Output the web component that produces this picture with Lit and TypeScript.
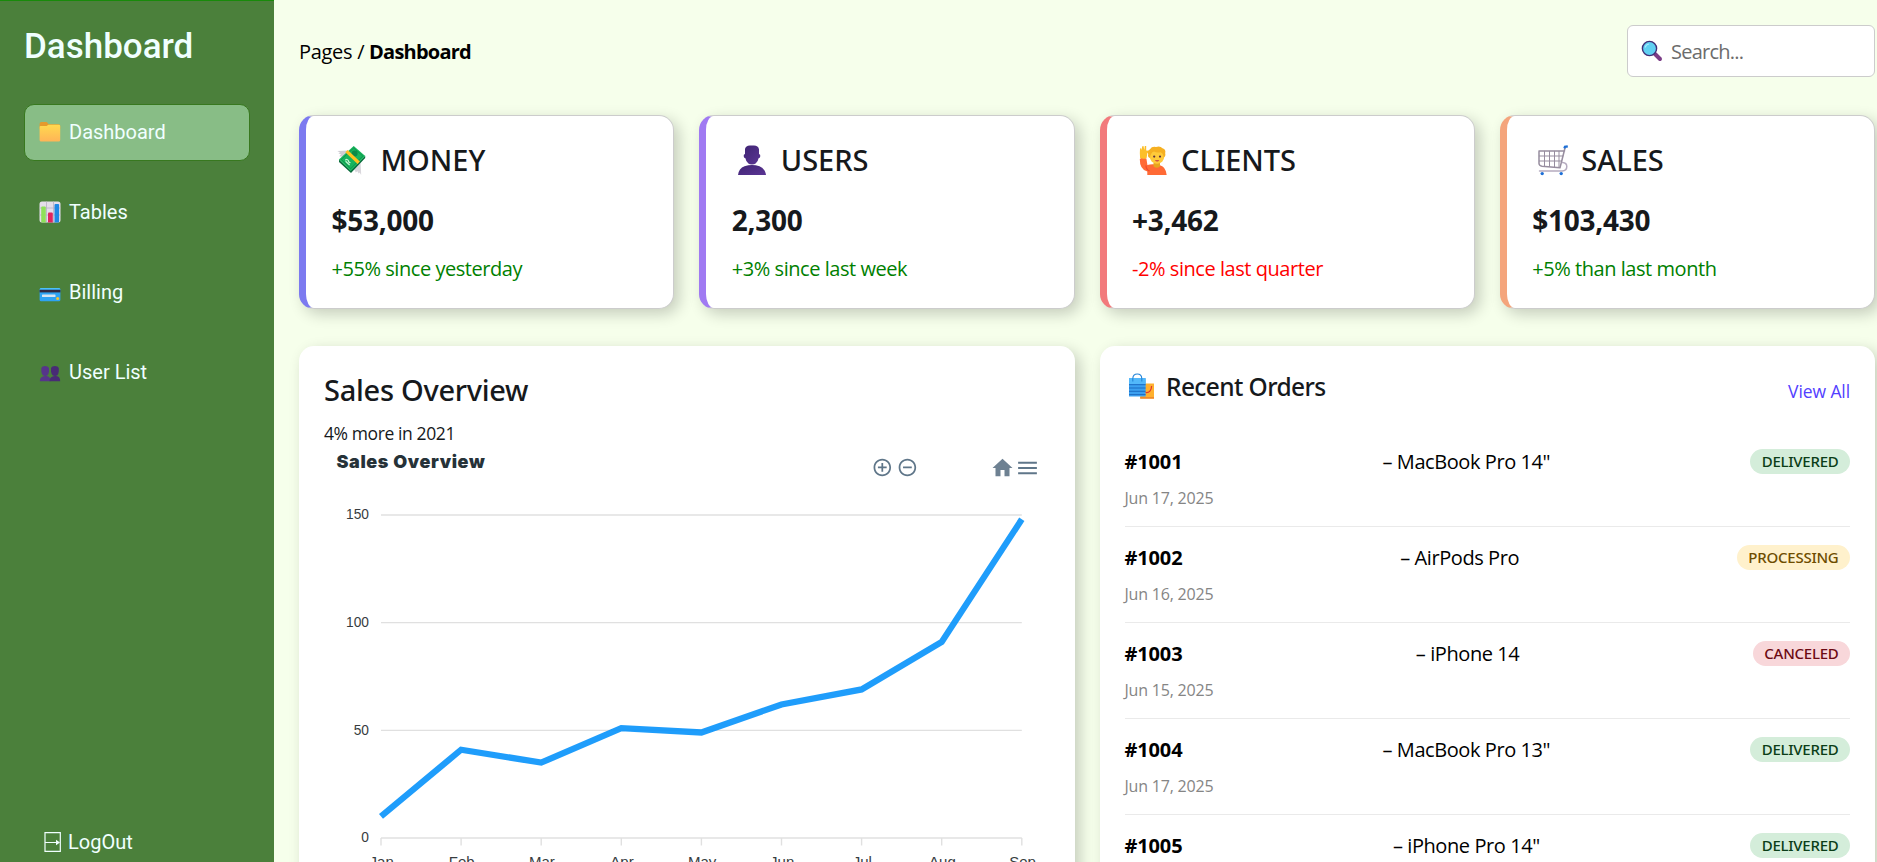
import { LitElement, html, svg, css } from "lit";
import { customElement } from "lit/decorators.js";
import { classMap } from "lit/directives/class-map.js";

const icons: Record<string, unknown> = {
  money: svg`<svg width="31" height="31" viewBox="0 0 31 31">
    <path d="M1.3 6 L12 5.6 L8 12 L3.2 11.2 L5 9.2 L2.4 8.4 L4 7.4Z" fill="#cfcdd3"/>
    <path d="M25.2 30 L24.6 17 L17.5 23 L19.8 27.4 L21.4 26.2 L22.6 28.6 L23.6 27.6Z" fill="#d9d7dc"/>
    <path d="M3 14.4 L14.7 25.6 L29.2 10.8 L29.2 13 L15 28 L3 17Z" fill="#0b6b3c"/>
    <path d="M17.7 1 L29.2 11 L14.8 26 L2.9 14.4Z" fill="#17b45c"/>
    <path d="M17.7 3 L26.8 11 L14.8 23.6 L5.3 14.4Z" fill="none" stroke="#0d8f4a" stroke-width=".8"/>
    <circle cx="18.6" cy="8.6" r="3" fill="#0d8a48"/>
    <path d="M9.3 15.2q2-1.6 3 .3q.6 2.600 2.200 2M9.600 16.300l4 3.700" fill="none" stroke="#c9f2d5" stroke-width="1.200"/>
    <path d="M11.700 4.900 L23.800 16.600 L21.600 19 L9.300 7.300Z" fill="#ffc21f"/>
  </svg>`,
  user: svg`<svg width="31" height="31" viewBox="0 0 31 31">
    <defs><linearGradient id="u" x1="0" y1="0" x2="1" y2="1"><stop offset="0" stop-color="#3f2473"/><stop offset="1" stop-color="#5b3594"/></linearGradient></defs>
    <path d="M9 4Q9.800 .4 14 .5h4q4.200 0 5 3.700v4.800q1.600.3 1.300 2.200q-.3 1.900-1.700 2q-.6 3.500-3 5.300q-1.200.9-3.600.9t-3.600-.9q-2.400-1.800-3-5.300q-1.400-.1-1.700-2q-.3-1.900 1.300-2.200Z" fill="url(#u)"/>
    <path d="M2 30q.8-6.500 6.500-8.700q7.500-2.800 15 0Q29.200 23.500 30 30Z" fill="url(#u)"/>
  </svg>`,
  client: svg`<svg width="31" height="31" viewBox="0 0 31 31">
    <path d="M2.800 14q2.400-2.200 6.600-.4l1 6.400q5-1.800 12.600.2q6 1.600 6.700 9.800H10.300V26.500Q2.600 24.500 2.800 14Z" fill="#ff6a35"/>
    <path d="M9 20.500q0 4 3.500 5.500" fill="none" stroke="#f0492f" stroke-width="1.200"/>
    <path d="M3 4l1-1.200l1 2.200V1.500l1.500-.6l.8 4l.5-4l1.400.2v4.400l2.800.2q.2 2-1.600 2.200l-.8 5q-3 1.600-6.500.2Q2.600 8 3 4Z" fill="#fcbf2a"/>
    <path d="M16.500 18h6.500v3.200q-3.300 3-6.500 0Z" fill="#e8a51f"/>
    <circle cx="20" cy="11.500" r="7.300" fill="#ffca3a"/>
    <path d="M11.200 9.500Q9.800 5.800 13 4.200Q15 1 19 2q4-1.600 6.500 1.300q3.700 1.200 2.700 5q.8 3-1.600 4.400q0-4.200-3-5.400q-4 .9-6.600-.8Q13.500 7.500 13 13q-2.600-1-1.800-3.500Z" fill="#f6b021"/>
    <circle cx="17.200" cy="11.600" r="1.100" fill="#5b2f3f"/><circle cx="23" cy="11.600" r="1.100" fill="#5b2f3f"/>
    <path d="M17.800 15.200h4.600q-2.200 2.800-4.600 0Z" fill="#c1304a"/>
  </svg>`,
  cart: svg`<svg width="31" height="31" viewBox="0 0 31 31">
    <g fill="none" stroke="#978d9f" stroke-width="1.500" stroke-linecap="round" stroke-linejoin="round">
      <path d="M2 6h25.500M2 6.500v12q.2 2.400 3 2.700l18 1.500L28 3"/>
      <path d="M2.300 11h23.500M2.300 16h22.500M7.500 6.300V21M12.500 6.300V21.500M17.500 6.300V22M22 6.300V22" stroke-width="1"/>
      <path d="M25.500 17.500q4.300.3 4.300 4q0 4.200-4.600 4.500H2.500" stroke="#b5abbf"/>
    </g>
    <path d="M27.300 3.300l.6-1.500l2.900-.5" fill="none" stroke="#1d6fd6" stroke-width="2.200"/>
    <circle cx="5.200" cy="28.600" r="1.700" fill="#1d6fd6"/><circle cx="24.200" cy="28.600" r="1.700" fill="#1d6fd6"/>
  </svg>`,
  bags: svg`<svg width="27" height="27" viewBox="0 0 27 27">
    <path d="M12.200 10.500h13.800V25.500H12.200Z" fill="#ffb02e"/><path d="M12.200 24h13.800v1.700H12.200Z" fill="#f08a2b"/>
    <path d="M1 5.200h16.600V23.500H1Z" fill="#3ba0f0"/><path d="M1 5.200h16.600V11H1Z" fill="#52b8fa"/>
    <path d="M1 11.700h16.600M1 15h16.600M1 18.300h16.600M1 21.600h16.600" stroke="#1767bd" stroke-width=".9"/>
    <path d="M4.800 8.500V5.500Q5 1 9.300 1t4.500 4.500v3" fill="none" stroke="#2384d8" stroke-width="1.100"/>
    <path d="M17.600 19.500q5.600.5 6-6.500" fill="none" stroke="#e0342f" stroke-width="1.200"/>
  </svg>`,
  folder: svg`<svg width="22" height="22" viewBox="0 0 22 22">
    <defs><linearGradient id="f" x1="0" y1="0" x2="0" y2="1"><stop offset="0" stop-color="#ffd94f"/><stop offset="1" stop-color="#ffb457"/></linearGradient></defs>
    <path d="M.6 3Q.6 1 2.400 1h5.200l2.200 2.200h9.800q1.600 0 1.600 1.600V8H.6Z" fill="#e59a2c"/>
    <path d="M.6 6q0-1 1-1h6l1.800-1.200h10.400q1.400 0 1.400 1.200v14q0 1.600-1.600 1.600H2.200q-1.600 0-1.600-1.600Z" fill="url(#f)"/>
  </svg>`,
  chart: svg`<svg width="22" height="22" viewBox="0 0 22 22">
    <rect x=".5" y=".5" width="21" height="21" rx="2.500" fill="#e4deea"/>
    <path d="M.5 7h21M.5 14h21M7.500.5v21M14.500.5v21" stroke="#b8aec4" stroke-width=".8"/>
    <path d="M2.200 6.500q0-1 1-1h2.600q1 0 1 1v15H3q-.8-.4-.8-1Z" fill="#8fe05a"/>
    <path d="M9 12.500q0-1 1-1h2.800q1 0 1 1v9H9Z" fill="#e0245e"/>
    <path d="M15.500 4q0-1 1-1h2.600q1 0 1 1v16.500q0 1-1 1h-3.600Z" fill="#1e88e5"/>
  </svg>`,
  card: svg`<svg width="22" height="22" viewBox="0 0 22 22">
    <rect x=".6" y="7" width="20.800" height="13.200" rx="1.500" fill="#2ea3f2"/>
    <path d="M.6 8.500q0-1.500 1.500-1.500h17.800q1.500 0 1.500 1.500H.6Z" fill="#4cc0fa"/>
    <rect x=".6" y="8.800" width="20.800" height="2.600" fill="#33283f"/>
    <rect x="3" y="13.400" width="13.500" height="2.600" rx=".6" fill="#d6e4f0"/>
    <circle cx="18.600" cy="17.600" r="1.500" fill="#f9c22e"/>
  </svg>`,
  users: svg`<svg width="22" height="22" viewBox="0 0 22 22">
    <g fill="#56358a"><path d="M2.300 7Q3 5 6 5t4 2v3.500Q9.500 15 6.200 15T2.300 10.500ZM.8 20.200q0-5 5.400-5.300t5.300 5.300Z"/></g>
    <g fill="#482b75"><path d="M12 7q.7-2 3.900-2t3.900 2v3.500q-.5 4.500-3.800 4.500t-4-4.500ZM10.500 20.200q0-5 5.400-5.300t5.300 5.300Z"/></g>
  </svg>`,
  search: svg`<svg width="22" height="22" viewBox="0 0 22 22">
    <path d="M13.500 13.500l5.500 5.500" stroke="#7b3c86" stroke-width="4" stroke-linecap="round"/>
    <circle cx="8.500" cy="8.500" r="7.100" fill="#5fd0f2" stroke="#3f2f78" stroke-width="1.400"/>
    <path d="M4 7.500q1-3 4-3.500" stroke="#a8ecff" stroke-width="1.200" fill="none"/>
  </svg>`,
};

@customElement("side-bar")
class SideBar extends LitElement {
  static styles = css`
    :host { display: flex; flex-direction: column; box-sizing: border-box; width: 274px; height: 862px; flex: none;
      padding: 23px 24.500px 8px 24px; border-top: 1px solid #188a0a; background: #4b803b; color: #f0ffff;
      font: 20px/24px Roboto, sans-serif; }
    h1 { margin: 0 0 34px; font-size: 35px; line-height: 46px; font-weight: 500; }
    nav { display: flex; flex-direction: column; gap: 23px; }
    .item { display: flex; align-items: center; gap: 8px; box-sizing: border-box; height: 57px; padding: 0 14px 2px;
      border: 1px solid transparent; border-radius: 10px; }
    .item.active { background: #88bd86; border-color: #38781f; }
    .item svg { display: block; }
    .logout { display: flex; align-items: center; gap: 6px; margin-top: auto; padding-left: 20px; }
  `;
  items = [["folder", "Dashboard"], ["chart", "Tables"], ["card", "Billing"], ["users", "User List"]];
  render() {
    return html`<h1>Dashboard</h1>
      <nav>${this.items.map(([icon, label], i) => html`<a class=${classMap({ item: true, active: i === 0 })}>${icons[icon]}<span>${label}</span></a>`)}</nav>
      <a class="logout"><svg width="18" height="20" viewBox="0 0 18 20"><path d="M1 .7h15.300v18.600H1ZM1 10.500h11" fill="none" stroke="#f0ffff" stroke-width="1.200"/><path d="M12 7.700l4 2.800l-4 2.800Z" fill="#f0ffff"/></svg><span>LogOut</span></a>`;
  }
}

interface Stat { icon: string; title: string; value: string; delta: string; tone: string; down?: boolean }

@customElement("stat-card")
class StatCard extends LitElement {
  static properties = { stat: { attribute: false } };
  declare stat: Stat;
  static styles = css`
    :host { display: block; min-width: 0; }
    .card { box-sizing: border-box; height: 193.5px; padding: 24px 20px 0 25.500px; background: #fff; color: #16191c;
      border: 1px solid #ccc; border-left-width: 7px; border-radius: 15px; box-shadow: 5px 5px 15px rgba(0, 0, 0, .2); }
    .indigo { border-left-color: #7c7af0; } .violet { border-left-color: #a07af2; }
    .red { border-left-color: #f27a7c; } .orange { border-left-color: #f4a57c; }
    .title { display: flex; align-items: center; gap: 13.500px; padding-left: 4.500px; height: 40px;
      font: 500 29px/40px "Noto Sans", sans-serif; letter-spacing: 0; }
    .value { margin-top: 21px; font-size: 28px; line-height: 38px; font-weight: 700; letter-spacing: -.25px; }
    .delta { margin-top: 15px; line-height: 30px; color: #008000; letter-spacing: -.45px; }
    .down { color: #f00; }
  `;
  render() {
    const s = this.stat;
    return html`<div class=${"card " + s.tone}>
      <div class="title">${icons[s.icon]}<span>${s.title}</span></div>
      <div class="value">${s.value}</div>
      <div class=${classMap({ delta: true, down: !!s.down })}>${s.delta}</div>
    </div>`;
  }
}

@customElement("sales-chart")
class SalesChart extends LitElement {
  static styles = css`
    :host { display: block; }
    svg { display: block; }
    .grid { stroke: #e0e0e0; stroke-width: 1.4; }
    .line { fill: none; stroke: #008ffb; stroke-opacity: .88; stroke-width: 6.25; }
    .title { font: 900 18px Inter, sans-serif; letter-spacing: .6px; fill: #263238; }
    .ylab { font: 13.75px "Liberation Sans", Arial, sans-serif; text-anchor: end; fill: #373d3f; }
    .xlab { font: 15px "Liberation Sans", Arial, sans-serif; text-anchor: middle; fill: #373d3f; }
    .tool { fill: #5f7689; }
  `;
  values = [10, 41, 35, 51, 49, 62, 69, 91, 148];
  months = ["Jan", "Feb", "Mar", "Apr", "May", "Jun", "Jul", "Aug", "Sep"];
  render() {
    const x = (i: number) => 57 + i * 80.1;
    const y = (v: number) => 392 - v * 2.1535;
    return html`<svg width="726" height="440" viewBox="0 0 726 440">
      <text class="title" x="12.500" y="22">Sales Overview</text>
      ${[0, 50, 100, 150].map(v => svg`<line class="grid" x1="57" x2="697.800" y1=${y(v)} y2=${y(v)}></line><text class="ylab" x="45" y=${y(v) + 4.2}>${v}</text>`)}
      ${this.months.map((m, i) => svg`<line class="grid" x1=${x(i)} x2=${x(i)} y1="392" y2="399.500"></line><text class="xlab" x=${x(i) + .7} y="421">${m}</text>`)}
      <polyline class="line" points=${this.values.map((v, i) => `${x(i)},${y(v)}`).join(" ")}></polyline>
      <g class="tool">
        <path transform="translate(547.800 10.900) scale(.875)" d="M13 7h-2v4H7v2h4v4h2v-4h4v-2h-4V7zm-1-5C6.480 2 2 6.480 2 12s4.480 10 10 10 10-4.480 10-10S17.520 2 12 2zm0 18c-4.410 0-8-3.590-8-8s3.590-8 8-8 8 3.590 8 8-3.590 8-8 8z"></path>
        <path transform="translate(572.900 10.900) scale(.875)" d="M7 11v2h10v-2H7zm5-9C6.480 2 2 6.480 2 12s4.480 10 10 10 10-4.480 10-10S17.520 2 12 2zm0 18c-4.410 0-8-3.590-8-8s3.590-8 8-8 8 3.590 8 8-3.590 8-8 8z"></path>
        <path transform="translate(666.500 9.800) scale(1 1.020)" fill="#6e8192" d="M10 20v-6h4v6h5v-8h3L12 3 2 12h3v8z"></path>
        <path transform="translate(691 9.500) scale(1.042)" d="M3 18h18v-2H3v2zm0-5h18v-2H3v2zm0-7v2h18V6H3z"></path>
      </g>
    </svg>`;
  }
}

@customElement("recent-orders")
class RecentOrders extends LitElement {
  static styles = css`
    :host { display: block; }
    header { display: flex; justify-content: space-between; height: 34px; margin-bottom: 28px; }
    .heading { display: flex; align-items: center; gap: 11px; padding-left: 3.500px; color: #16191c;
      font: 500 24.500px/34px "Noto Sans", sans-serif; letter-spacing: -.6px; }
    .heading span { padding-top: 2px; }
    .all { padding-top: 10px; font-size: 17.5px; line-height: 24px; letter-spacing: -.1px; color: #5340ff; }
    .order { box-sizing: border-box; height: 96px; padding-top: 15px; border-bottom: 1px solid #eaeaea; }
    .row { display: flex; justify-content: space-between; align-items: center; height: 30px; }
    .row b { padding-top: 2px; letter-spacing: -.15px; }
    .name { padding-top: 2px; letter-spacing: -.42px; }
    .date { margin-top: 10px; font-size: 16px; line-height: 24px; letter-spacing: -.2px; color: #858585; }
    .badge { height: 25px; padding: 0 11.500px; border-radius: 12.500px; letter-spacing: -.25px;
      font: 500 15px/24px "Noto Sans", sans-serif; }
    .delivered { background: #d4edda; color: #0b3d18; }
    .processing { background: #fff1cc; color: #6e4d00; }
    .canceled { background: #f8d7da; color: #6d0a14; }
  `;
  orders = [
    ["#1001", "– MacBook Pro 14\"", "delivered", "Jun 17, 2025"],
    ["#1002", "– AirPods Pro", "processing", "Jun 16, 2025"],
    ["#1003", "– iPhone 14", "canceled", "Jun 15, 2025"],
    ["#1004", "– MacBook Pro 13\"", "delivered", "Jun 17, 2025"],
    ["#1005", "– iPhone Pro 14\"", "delivered", "Jun 17, 2025"],
  ];
  render() {
    return html`<header><div class="heading">${icons.bags}<span>Recent Orders</span></div><a class="all">View All</a></header>
      ${this.orders.map(([id, name, status, date]) => html`<div class="order">
        <div class="row"><b>${id}</b><span class="name">${name}</span><span class=${"badge " + status}>${status.toUpperCase()}</span></div>
        <div class="date">${date}</div></div>`)}`;
  }
}

@customElement("app-root")
class AppRoot extends LitElement {
  static styles = css`
    :host { display: flex; height: 862px; overflow: hidden; background: #f6ffeb; color: #000;
      font: 20px/30px "Open Sans", "Noto Sans", sans-serif; }
    main { flex: 1; min-width: 0; padding: 25px 2px 0 25px; }
    .top { display: flex; align-items: center; justify-content: space-between; height: 52px; margin-bottom: 38px; }
    .crumbs { padding-top: 2px; letter-spacing: -.3px; }
    .crumbs b { letter-spacing: -.78px; }
    .search { display: flex; align-items: center; gap: 8px; box-sizing: border-box; width: 248px; height: 52px; padding-left: 13px;
      background: #fff; border: 1px solid #ccc; border-radius: 6px; color: #6c6c6c; letter-spacing: -.75px; }
    .search span { padding-top: 2px; }
    .stats { display: grid; grid-template-columns: repeat(4, 1fr); gap: 25px; margin-bottom: 37.500px; }
    .panels { display: grid; grid-template-columns: 1fr 1fr; gap: 25px; }
    .panel { box-sizing: border-box; min-width: 0; height: 600px; padding: 23px 25px; background: #fff; border-radius: 15px;
      box-shadow: 5px 5px 15px rgba(0, 0, 0, .2); }
    h2 { margin: 1px 0 10px; font: 500 29px/40px "Noto Sans", sans-serif; letter-spacing: -.28px; color: #16191c; }
    .sub { font-size: 17.500px; line-height: 26px; letter-spacing: -.4px; color: #16191c; }
  `;
  stats: Stat[] = [
    { icon: "money", title: "MONEY", value: "$53,000", delta: "+55% since yesterday", tone: "indigo" },
    { icon: "user", title: "USERS", value: "2,300", delta: "+3% since last week", tone: "violet" },
    { icon: "client", title: "CLIENTS", value: "+3,462", delta: "-2% since last quarter", tone: "red", down: true },
    { icon: "cart", title: "SALES", value: "$103,430", delta: "+5% than last month", tone: "orange" },
  ];
  render() {
    return html`<side-bar></side-bar>
      <main>
        <div class="top"><div class="crumbs">Pages / <b>Dashboard</b></div>
          <div class="search">${icons.search}<span>Search...</span></div></div>
        <div class="stats">${this.stats.map(s => html`<stat-card .stat=${s}></stat-card>`)}</div>
        <div class="panels">
          <section class="panel"><h2>Sales Overview</h2><div class="sub">4% more in 2021</div><sales-chart></sales-chart></section>
          <section class="panel"><recent-orders></recent-orders></section>
        </div>
      </main>`;
  }
}
